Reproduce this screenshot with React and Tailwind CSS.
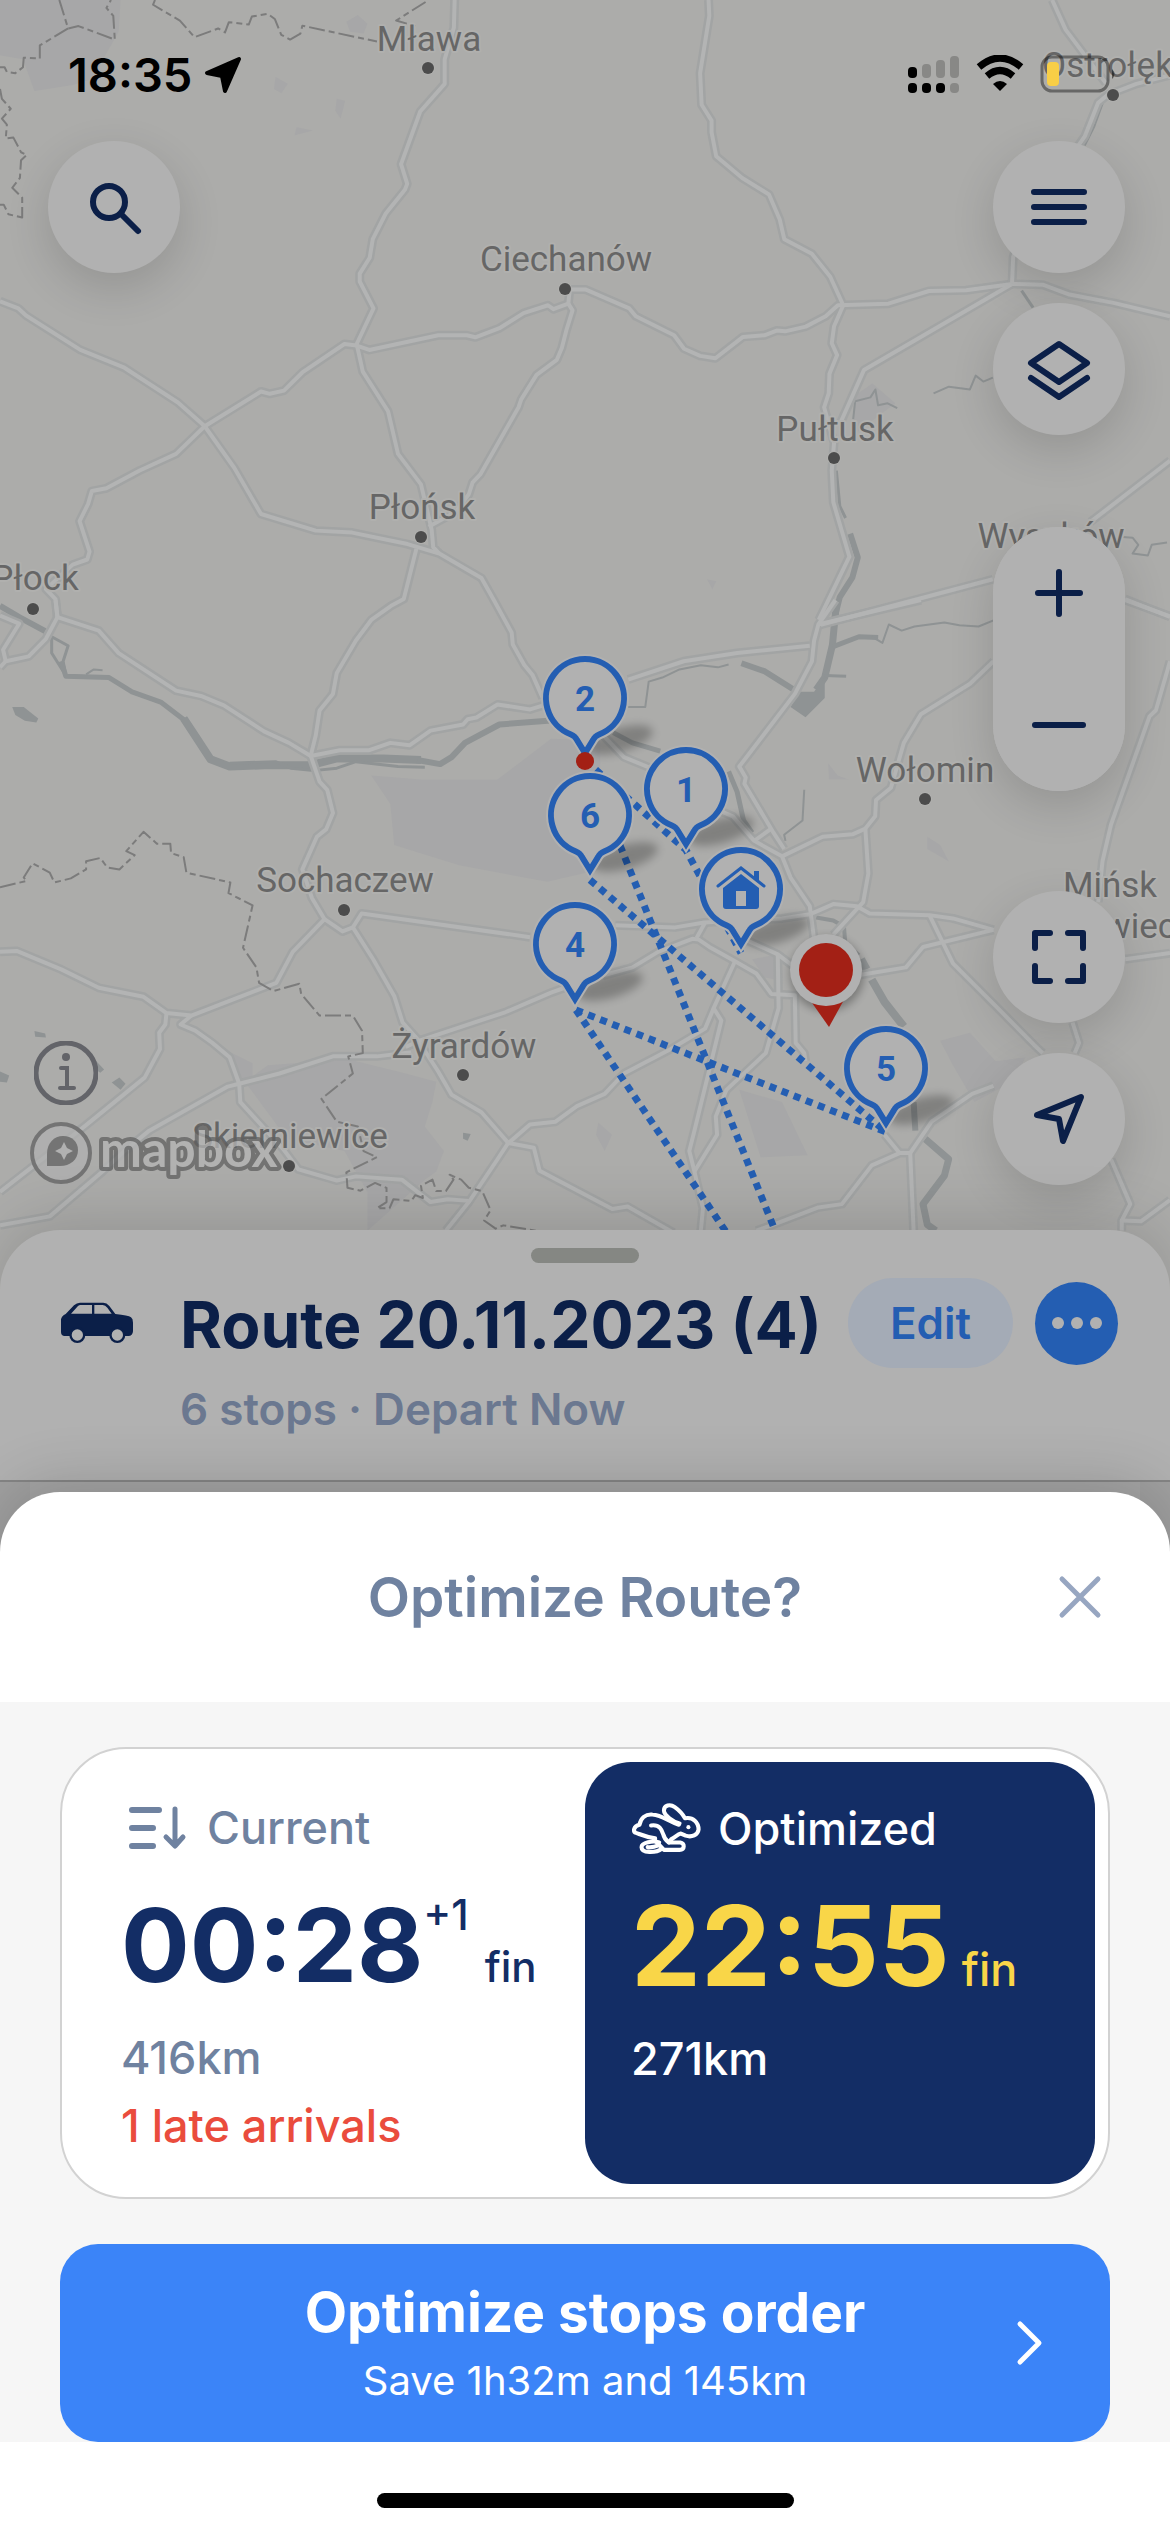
import React from "react";

/* Each map tile carries its own grid; lines are drawn in the grid of the tile they start in. */
const TILES = {
  nw: "translate(0 0) scale(0.3827 0.3954)",
  ne: "translate(570 0) scale(0.3827 0.3954)",
  sw: "translate(0 600) scale(0.3827 0.4082)",
  se: "translate(500 600) scale(0.4273 0.4082)",
};

const ROADS = {
  nw: [
    "1188,0 1186,70 1162,150 1162,212 1098,282 1048,415 1064,465 1058,480 1008,540 974,605 966,652 940,692 940,712 976,780 932,870 948,940 1014,1040 1040,1148 1100,1225 1128,1340 1132,1384 1148,1400",
    "0,762 48,780 68,798 210,885 325,930 465,1018 535,1078 612,1183 682,1300 825,1342 920,1347 1065,1376 1148,1400 1258,1462 1290,1517 1337,1600 1340,1630 1370,1682 1392,1708 1418,1765",
    "535,1078 460,1148 365,1190 278,1235 240,1242 230,1275 208,1318 234,1395 228,1415 190,1428 120,1490 145,1515 150,1560",
    "535,1078 682,990 705,996 742,988 790,942 900,870 932,874 965,885 1145,848 1220,848 1242,853 1305,830 1368,792 1432,772 1446,782 1485,768 1488,740",
    "1485,768 1496,785 1480,835 1468,880 1455,910 1402,948 1362,1010 1355,1030 1255,1200 1235,1220 1225,1250 1190,1295 1120,1332",
    "1088,1388 1055,1515 1022,1532 970,1568 930,1620 880,1702 870,1755 835,1797 825,1860 812,1911",
  ],
  ne: [
    "362,0 364,40 340,185 344,265 370,305 370,335 382,395 450,450 520,492 548,555 560,605 632,642 680,700 714,772 690,825 684,868 698,898 678,945 676,995 664,1030 690,1120 684,1190 688,1270 730,1408 650,1568",
    "0,740 0,732 40,732 155,780 172,800 272,848 298,882 340,900 380,906 452,852 508,848 540,836 562,838 616,826 668,800 700,772 832,768 938,736 1035,734 1155,718 1235,720 1305,745 1420,766 1568,800",
    "1155,718 768,936 704,1075",
    "1260,0 1295,75 1400,210",
    "1568,190 1480,212 1405,240 1380,260 1345,345 1190,560 1158,650 1155,718",
    "1568,1165 1360,1320",
    "655,1580 1105,1465",
    "1450,1515 1568,1560",
  ],
  sw: [
    "145,0 150,42 258,75 310,130 460,222 525,235 585,258 690,322 755,350 812,382 888,368 965,368 1020,350 1070,356 1125,320 1210,305 1222,292 1245,288 1300,256 1385,268 1420,258",
    "150,42 120,95 75,138 15,150 0,165",
    "0,38 50,58 8,122 15,150",
    "812,382 835,445 855,465 870,522 852,562 828,580 790,660 815,730 848,782 895,812 922,802 945,768 1385,826",
    "848,782 765,862 722,938 500,1018 435,1012 375,972 258,950 160,905 45,860 0,862",
    "922,802 975,880 1030,970 1052,1035 1090,1075 1145,1155 1180,1212 1258,1255 1328,1330 1395,1342 1410,1398 1600,1492 1640,1486 1760,1550",
    "1060,1095 1100,1078 1320,1010 1440,962 1490,945",
    "1075,1108 985,1118 870,1118 730,1160 625,1185 595,1192 390,1300 325,1350 268,1400 130,1510 0,1532",
    "435,1012 432,1040 416,1060 418,1100 378,1170 220,1290 0,1450",
    "500,1018 472,1040 510,1055 555,1085 600,1120 625,1185 628,1230 740,1345 780,1395 880,1422 930,1412 1050,1420 1125,1475 1170,1468 1225,1472",
    "1328,1330 1300,1370 1225,1475 1165,1545",
  ],
  se: [
    "20,1330 70,1285 130,1278 180,1240 245,1210 290,1160 400,1100 480,1050 500,1000",
    "270,797 410,802 478,790 660,780 725,770 780,745 835,750 865,768 1005,772 1060,780 1155,808",
    "240,920 310,900 370,862 450,830 465,832 490,850 550,885 600,915 635,965 690,968 692,1085 712,1110 715,1130",
    "460,828 480,790",
    "300,195 430,150 555,130 725,112",
    "785,0 745,60 735,100 730,150 690,230 560,408 575,435 572,450 640,570 665,610",
    "745,60 985,0",
    "1155,150 1100,205 985,280 945,350 915,460 880,490 878,530 855,560 825,574 755,580 660,628",
    "855,560 862,670 850,740 780,820",
    "240,330 290,385 360,415",
    "500,510 545,530 595,590 660,628 680,680 725,750 735,830",
    "595,590 635,560",
    "570,830 650,868 690,900",
    "650,868 652,1000 622,1110 530,1200 505,1265 508,1310 455,1400",
    "550,885 500,1000 518,1030 490,1150 455,1300 443,1350 455,1400 475,1490 470,1545",
    "845,918 950,900 990,850 1155,808",
    "1005,772 1060,890 1165,1000 1250,1090 1270,1110",
    "1568,150 1535,270 1520,285 1430,550 1410,640 1400,740",
    "1568,865 1463,880",
    "1340,1035 1355,1085 1345,1110",
    "1155,1190 1105,1210 1010,1278 960,1355 935,1355 870,1385 800,1480 745,1488 640,1530 600,1545",
    "900,1310 935,1355",
    "960,1355 968,1545",
    "1430,1370 1475,1480 1455,1520 1455,1545",
    "1455,1520 1500,1522 1568,1470",
    "1463,0 1568,40",
  ],
};

const BORDERS = {
  nw: [
    "155,0 178,72 205,66 300,100 296,40 278,20 290,0",
    "178,72 104,115 104,148 62,146 60,170 40,185 18,182 12,170 0,170",
    "0,225 5,250 28,275 5,300 18,315 15,350 35,348 55,385 70,392 55,405 52,450 32,475 58,500 58,550 22,542 10,518 0,518",
    "405,0 400,12 470,52 508,94 570,72 588,82 598,56 650,62 658,42 700,35 718,48 735,88 758,100 785,85 790,65 985,105",
    "1112,5 1035,52 1085,66",
  ],
  sw: [
    "0,704 70,688 62,680 85,645 130,668 142,692 185,682 225,660 225,640 262,632 280,655 312,660 352,625 330,615 375,568 410,597 445,597 447,620 480,630 487,668 602,692 597,718 660,748 635,852 670,900 677,938 715,958 782,940 787,965 835,1018 922,1018 946,1055 948,1110 910,1118 922,1160 840,1222 880,1278 935,1290 950,1350 985,1365 905,1402 908,1440 942,1447 980,1428 1010,1440 1010,1475 985,1490 1018,1490 1028,1468 1075,1472 1085,1458 1105,1465 1100,1435 1130,1420 1140,1448 1165,1448 1185,1420 1175,1408 1205,1420 1225,1440 1260,1448 1282,1495 1265,1520 1295,1540 1315,1532 1400,1545",
  ],
};

const RIVERS = [
  ["sw", 6, "0,14 50,42 118,76"],
  ["sw", 3, "135,90 178,112 165,150 172,185 135,130 135,90"],
  ["sw", 5, "160,150 172,187 285,190 345,225 420,250 490,300"],
  ["sw", 2, "225,182 245,170 268,172"],
  ["sw", 8, "480,290 515,340 550,390 600,408 690,405 810,405 880,388 1000,388 1100,392"],
  ["sw", 3, "600,400 720,396 760,412 820,418 880,412 930,396 1040,408 1110,410"],
  ["sw", 6, "1090,392 1150,402 1180,385 1215,350 1305,305 1440,295"],
  ["se", 5, "265,325 310,350 375,370"],
  ["se", 6, "565,155 620,175 700,228"],
  ["se", 7, "788,0 778,110 760,190 740,220"],
  ["se", 5, "778,115 840,90 885,92"],
  ["se", 2, "870,90 895,105 910,60 940,75 970,65 1040,55 1075,62 1120,65 1155,50"],
  ["se", 2, "300,262 340,262 348,200 380,190 420,170 470,160 510,165 535,158"],
  ["se", 3, "760,185 810,187"],
  ["se", 5, "535,420 555,470 570,540 590,570"],
  ["se", 2, "712,465 708,540 665,575 668,590"],
  ["se", 2, "665,640 690,690"],
  ["se", 4, "740,778 780,785 805,800 808,840 840,870"],
  ["se", 8, "845,880 858,905"],
  ["se", 8, "870,930 900,985 945,1045"],
  ["se", 6, "968,1230 972,1300"],
  ["se", 7, "995,1320 1050,1370 1040,1410 990,1480 1000,1530 1020,1545"],
  ["ne", 3, "696,1190 705,1280 720,1310"],
  ["ne", 6, "732,1350 752,1410 738,1460 705,1510 690,1568"],
  ["ne", 2, "950,995 990,978 1045,985 1060,950 1080,965 1105,955"],
  ["ne", 2, "740,1060 745,1015 785,1005 798,985 805,1025 830,1020 855,1032"],
  ["ne", 2, "1400,240 1370,320 1345,368"],
  ["ne", 3, "1180,735 1210,778"],
  ["ne", 2, "1445,1358 1470,1360 1485,1378 1470,1400 1510,1405 1520,1378 1560,1372"],
];

const WATER = [
  ["se", "680,262 700,225 735,225 760,190 760,240 715,287"],
  ["sw", "32,262 62,262 100,290 95,300 65,296 40,282"],
  ["sw", "90,1056 118,1062 120,1072 92,1070"],
  ["sw", "292,1182 312,1170 328,1185 315,1200"],
  ["sw", "0,1155 24,1165 18,1182 0,1180"],
  ["sw", "250,1128 272,1150 262,1158 250,1150"],
  ["sw", "1210,1305 1230,1308 1222,1325 1210,1320"],
];

const FORESTS = [
  ["nw", "0,0 315,0 310,80 240,200 190,215 90,230 60,150 0,140"],
  ["nw", "905,55 935,38 960,60 950,85 915,80"],
  ["nw", "720,195 752,212 735,236 716,225"],
  ["nw", "880,250 902,255 890,300 876,280"],
  ["nw", "775,322 818,330 770,342"],
  ["ne", "358,1465 382,1470 372,1490"],
  ["ne", "745,1000 790,970 850,1020 740,1100"],
  ["sw", "970,430 1100,440 1300,440 1440,340 1568,345 1568,660 1430,690 1200,650 1030,600 1020,500"],
  ["sw", "640,1180 700,1140 910,1125 1060,1160 1140,1180 1130,1230 1110,1290 1160,1350 1140,1400 1110,1420 960,1545 960,1450 900,1350 750,1320"],
  ["sw", "585,1100 660,1135 660,1180 625,1180"],
  ["se", "1030,1080 1100,1060 1160,1130 1230,1120 1200,1180 1110,1230 1060,1140"],
  ["se", "560,1200 660,1230 720,1360 610,1365"],
  ["se", "230,1280 262,1310 245,1350 225,1310"],
  ["se", "590,880 640,870 648,930 620,925"],
  ["se", "768,400 790,430 815,440 770,440"],
  ["se", "1000,580 1030,600 1050,640 1000,610"],
];

const CITIES = [
  ["Mława", 429, 51, 428, 68],
  ["Ostrołęka", 1117, 77, 1113, 95],
  ["Ciechanów", 566, 271, 565, 289],
  ["Pułtusk", 835, 441, 834, 458],
  ["Płońsk", 422, 519, 421, 537],
  ["Wyszków", 1051, 548, 1051, 565],
  ["Płock", 35, 590, 33, 609],
  ["Wołomin", 925, 782, 925, 799],
  ["Mińsk", 1110, 897, 1110, 960],
  ["Mazowiecki", 1110, 938, 1110, 960],
  ["Sochaczew", 345, 892, 344, 910],
  ["Żyrardów", 464, 1058, 463, 1075],
  ["Skierniewice", 290, 1148, 289, 1166],
];

const PINS = [
  ["2", 585, 698],
  ["6", 590, 815],
  ["1", 686, 789],
  ["4", 575, 944],
  ["5", 886, 1068],
  ["home", 741, 889],
];

const PIN_PATH = "M-14 36.5A39 39 0 1 1 14 36.5Q10 38 8 42L0 55L-8 42Q-10 38 -14 36.5Z";

function Tile({ at, children }) {
  return <g transform={TILES[at]}>{children}</g>;
}

function Line({ points, ...rest }) {
  return <polyline points={points} fill="none" strokeLinejoin="round" vectorEffect="non-scaling-stroke" {...rest} />;
}

function Map() {
  return (
    <svg
      className="absolute inset-x-0 top-0 h-full w-full"
      viewBox="0 0 1170 1290"
      preserveAspectRatio="xMidYMin slice"
      role="img"
      aria-label="Map with route stops"
    >
      <defs>
        <filter id="soft" x="-50%" y="-50%" width="200%" height="200%">
          <feGaussianBlur stdDeviation="4" />
        </filter>
      </defs>
      <rect width="1170" height="1290" fill="#acacaa" />
      {FORESTS.map(([tile, pts]) => (
        <Tile key={pts} at={tile}>
          <polygon points={pts} fill="#a7a7a8" />
        </Tile>
      ))}
      {RIVERS.map(([tile, w, pts]) => (
        <Tile key={pts} at={tile}>
          <Line points={pts} stroke="#8f9394" strokeWidth={w} />
        </Tile>
      ))}
      {WATER.map(([tile, pts]) => (
        <Tile key={pts} at={tile}>
          <polygon points={pts} fill="#8f9394" />
        </Tile>
      ))}
      {Object.keys(ROADS).map((tile) => (
        <Tile key={tile} at={tile}>
          {ROADS[tile].map((p) => (
            <Line key={p} points={p} stroke="#a2a4a4" strokeWidth="9" />
          ))}
        </Tile>
      ))}
      {Object.keys(ROADS).map((tile) => (
        <Tile key={tile} at={tile}>
          {ROADS[tile].map((p) => (
            <Line key={p} points={p} stroke="#b3b4b4" strokeWidth="4" />
          ))}
        </Tile>
      ))}
      {Object.keys(BORDERS).map((tile) => (
        <Tile key={tile} at={tile}>
          {BORDERS[tile].map((p) => (
            <Line key={p} points={p} stroke="#7c7c7c" strokeWidth="2" strokeDasharray="16 4 6 4" />
          ))}
        </Tile>
      ))}
      <g
        className="font-[Roboto,sans-serif] text-[35px]"
        fill="#666666"
        textAnchor="middle"
        stroke="#b0b0ae"
        strokeWidth="4"
        paintOrder="stroke"
        strokeLinejoin="round"
      >
        {CITIES.map(([name, x, y, dx, dy]) => (
          <React.Fragment key={name}>
            <circle cx={dx} cy={dy} r="6" fill="#4c4c4c" strokeWidth="2" />
            <text x={x} y={y}>{name}</text>
          </React.Fragment>
        ))}
      </g>
      <g fill="none" stroke="#245eb2" strokeWidth="7" strokeDasharray="7 6">
        <path d="M586 761L686 850L741 953" />
        <path d="M590 880L886 1132" />
        <path d="M576 1010L886 1132" />
        <path d="M576 1010L762 1285" />
        <path d="M586 761L797 1285" />
      </g>
      {PINS.map(([label, x, y]) => (
        <ellipse
          key={label}
          rx="34"
          ry="12"
          transform={`translate(${x + 35} ${y + 42}) rotate(-16)`}
          fill="#000000"
          opacity="0.25"
          filter="url(#soft)"
        />
      ))}
      {PINS.map(([label, x, y]) => (
        <g key={label} transform={`translate(${x} ${y})`}>
          <path d={PIN_PATH} fill="#b1b1b1" stroke="#b1b1b1" strokeWidth="10" />
          <path d={PIN_PATH} fill="#b1b1b1" stroke="#245eb2" strokeWidth="6" />
          {label === "home" ? (
            <g fill="#245eb2">
              <path d="M-18 -1L0 -15L18 -1V17Q18 20 15 20H-15Q-18 20 -18 17Z" />
              <path d="M-23 -3L0 -21L23 -3" fill="none" stroke="#245eb2" strokeWidth="3" strokeLinecap="round" />
              <path d="M13 -18H18V-6L13 -10Z" />
              <rect x="-5" y="2" width="10" height="15" fill="#b1b1b1" />
            </g>
          ) : (
            <text y="13" textAnchor="middle" fill="#245eb2" className="font-[Roboto,sans-serif] text-[35px] font-bold">
              {label}
            </text>
          )}
        </g>
      ))}
      <circle cx="585" cy="761" r="9" fill="#a32015" />
      <circle cx="827" cy="974" r="37" fill="#000000" opacity="0.3" filter="url(#soft)" />
      <path d="M810 1000L845 998L829 1027Z" fill="#a32015" />
      <circle cx="826" cy="970" r="36" fill="#b1b1b1" />
      <circle cx="826" cy="970" r="27" fill="#a32015" />
    </svg>
  );
}

function StatusBar() {
  return (
    <header className="flex items-start justify-between pt-[50px] pr-[52px] pl-[68px] text-black">
      <div className="flex items-center gap-3">
        <time className="text-[47px] leading-[50px] font-semibold">18:35</time>
        <svg width="38" height="38" viewBox="0 0 38 38" aria-hidden="true">
          <path d="M35 3L21 35L18 20L3 17Z" fill="currentColor" stroke="currentColor" strokeWidth="4" strokeLinejoin="round" />
        </svg>
      </div>
      <div className="flex gap-4 pt-[5px]">
        <svg width="52" height="38" viewBox="0 0 52 38" aria-label="Signal">
          <g fill="#888886">
            <rect x="14" y="9" width="9" height="14" rx="4" />
            <rect x="28" y="5" width="9" height="18" rx="4" />
            <rect x="42" y="1" width="9" height="22" rx="4" />
            <rect x="42" y="28" width="9" height="10" rx="4" />
          </g>
          <rect y="12" width="9" height="11" rx="4" />
          <rect y="28" width="9" height="10" rx="4" />
          <rect x="14" y="28" width="9" height="10" rx="4" />
          <rect x="28" y="28" width="9" height="10" rx="4" />
        </svg>
        <svg width="48" height="38" viewBox="0 0 48 38" aria-label="Wi-Fi">
          <path d="M3 12Q24 -6 45 12" fill="none" stroke="#000" strokeWidth="7" />
          <path d="M11 21Q24 10 37 21" fill="none" stroke="#000" strokeWidth="7" />
          <path d="M24 36L17 29Q24 23 31 29Z" />
        </svg>
        <svg width="78" height="38" viewBox="0 0 78 38" aria-label="Battery low">
          <rect x="2" y="2" width="66" height="34" rx="10" fill="none" stroke="#000" strokeOpacity="0.4" strokeWidth="3" />
          <rect x="7" y="7" width="12" height="24" rx="4" fill="#f8ce46" />
          <path d="M72 14Q77 19 72 24Z" fillOpacity="0.5" />
        </svg>
      </div>
    </header>
  );
}

function Fab({ label, children, className = "rounded-full shadow-[0_15px_45px_rgba(0,0,0,0.14)]" }) {
  return (
    <button
      type="button"
      aria-label={label}
      className={`flex size-[132px] shrink-0 items-center justify-center bg-[#b1b1b1] text-[#0b1f48] ${className}`}
    >
      <svg
        className="size-[66px]"
        viewBox="-33 -33 66 66"
        fill="none"
        stroke="currentColor"
        strokeWidth="6"
        strokeLinecap="round"
        strokeLinejoin="round"
        aria-hidden="true"
      >
        {children}
      </svg>
    </button>
  );
}

function MapControls() {
  return (
    <div className="flex flex-1 items-stretch justify-between pt-[41px] pr-[45px] pb-[45px] pl-[30px]">
      <div className="flex flex-col items-start justify-between">
        <div className="pl-[18px]">
          <Fab label="Search">
            <circle cx="-5" cy="-5" r="16" />
            <path d="M7 7L24 24" />
          </Fab>
        </div>
        <div className="flex flex-col items-start gap-4">
          <button type="button" aria-label="Map information" className="ml-1">
            <svg className="size-[64px]" viewBox="0 0 64 64" fill="none" stroke="#636469" aria-hidden="true">
              <circle cx="32" cy="32" r="30" strokeWidth="5" />
              <circle cx="32" cy="16" r="4" fill="#636469" stroke="none" />
              <path d="M27 27H33V47M26 47H40" strokeWidth="4" strokeLinecap="round" />
            </svg>
          </button>
          <a href="#mapbox" aria-label="Mapbox" className="block">
            <svg width="260" height="64" viewBox="0 0 260 64" aria-hidden="true">
              <circle cx="31" cy="32" r="29" fill="#b1b1b1" fillOpacity="0.7" stroke="#747474" strokeWidth="4" />
              <path d="M17 45V33C17 22 24 15 33 15C42 15 48 21 48 29C48 39 40 45 30 45Z" fill="#747474" />
              <path d="M34 21L37 27L43 30L37 33L34 39L31 33L25 30L31 27Z" fill="#b1b1b1" />
              <text
                x="70"
                y="46"
                className="font-[Lato,sans-serif] text-[50px] font-bold"
                opacity="0.75"
                fill="#b4b4b4"
                stroke="#606060"
                strokeWidth="8"
                strokeLinejoin="round"
                paintOrder="stroke"
              >
                mapbox
              </text>
            </svg>
          </a>
        </div>
      </div>

      <div className="flex flex-col">
        <div className="flex flex-col gap-[30px]">
          <Fab label="Menu">
            <path d="M-25 -15H25M-25 0H25M-25 15H25" />
          </Fab>
          <Fab label="Map layers">
            <path d="M0 -25L28 -6L0 13L-28 -6Z" />
            <path d="M-28 9L0 28L28 9" />
          </Fab>
        </div>
        <div className="mt-[92px] flex flex-col rounded-full bg-[#b1b1b1] shadow-[0_15px_45px_rgba(0,0,0,0.14)]">
          <Fab label="Zoom in" className="rounded-t-full">
            <path d="M-21 0H21M0 -21V21" />
          </Fab>
          <Fab label="Zoom out" className="rounded-b-full">
            <path d="M-24 0H24" />
          </Fab>
        </div>
        <div className="mt-[100px] flex flex-col gap-[30px]">
          <Fab label="Fit route">
            <path d="M-24 -9V-24H-9M9 -24H24V-9M24 9V24H9M-9 24H-24V9" />
          </Fab>
          <Fab label="My location">
            <path d="M22 -22L4 22L0 0L-22 -4Z" />
          </Fab>
        </div>
      </div>
    </div>
  );
}

function CarIcon() {
  return (
    <svg width="74" height="42" viewBox="32 80 218 126" aria-hidden="true" className="shrink-0">
      <path
        d="M33 132Q35 122 47 116L72 90Q80 82 90 82H160Q170 82 178 92L196 116Q235 120 243 126Q249 130 249 142V168Q248 182 235 182H42Q33 180 33 170Z"
        fill="#0b1f48"
      />
      <path d="M63 115L84 92Q87 89 92 89H126V115ZM133 89H158Q166 90 172 97L185 115H133Z" fill="#b1b1b1" />
      <circle cx="82" cy="179" r="24" fill="#0b1f48" />
      <circle cx="82" cy="179" r="17" fill="#b1b1b1" />
      <circle cx="202" cy="179" r="24" fill="#0b1f48" />
      <circle cx="202" cy="179" r="17" fill="#b1b1b1" />
    </svg>
  );
}

function RoutePanel() {
  return (
    <section className="relative rounded-t-[60px] bg-[#b1b1b1] shadow-[0_-10px_60px_rgba(0,0,0,0.14)]">
      <div className="pt-[18px] pb-11">
        <div className="mx-auto h-[15px] w-[108px] rounded-full bg-[#858783]" />
        <div className="mt-[15px] flex h-[90px] items-center pr-[52px] pl-[60px]">
          <CarIcon />
          <h1 className="ml-[46px] flex-1 pt-1 text-[64px] leading-[76px] font-bold whitespace-nowrap text-[#0b1f48]">
            Route 20.11.2023 (4)
          </h1>
          <button type="button" className="h-[90px] w-[165px] shrink-0 rounded-full bg-[#a4abb6] text-[44px] font-semibold text-[#245eb2]">
            Edit
          </button>
          <button
            type="button"
            aria-label="More options"
            className="ml-[22px] flex size-[83px] shrink-0 items-center justify-center gap-[7px] rounded-full bg-[#245eb2]"
          >
            <span className="size-3 rounded-full bg-[#b1b1b1]" />
            <span className="size-3 rounded-full bg-[#b1b1b1]" />
            <span className="size-3 rounded-full bg-[#b1b1b1]" />
          </button>
        </div>
        <p className="mt-[14px] pl-[180px] text-[44px] leading-[54px] font-semibold text-[#6b7890]">6 stops · Depart Now</p>
      </div>
      <div className="h-[72px] border-t-2 border-[#858585] bg-[#a0a0a0] px-[30px]">
        <div className="h-full bg-[#a5a5a5]" />
      </div>
    </section>
  );
}

function SortIcon() {
  return (
    <svg width="68" height="54" viewBox="0 0 68 54" fill="none" stroke="currentColor" strokeWidth="6" strokeLinecap="round" strokeLinejoin="round" aria-hidden="true">
      <path d="M11 9H38M11 27H32M11 45H32" />
      <path d="M54 8V44M45 36L54 45L62 36" strokeWidth="5" />
    </svg>
  );
}

function RabbitIcon() {
  return (
    <svg width="72" height="55" viewBox="93 62 212 162" fill="none" stroke="currentColor" strokeWidth="12" strokeLinecap="round" strokeLinejoin="round" aria-hidden="true">
      <path d="M236 128C218 124 190 104 190 90C190 74 208 70 222 80C236 90 246 102 252 113C276 108 292 126 292 146C290 162 272 170 254 164L240 158C230 160 224 168 212 174L204 184H238C252 186 252 206 236 206H190L160 174" />
      <path d="M234 132C202 122 186 104 156 102C136 100 122 112 118 132C100 136 98 152 108 156C120 160 136 168 164 172" />
      <path d="M152 134C178 130 184 148 188 160C190 170 196 178 204 184" />
      <path d="M176 184C158 178 124 184 124 198C124 216 166 216 184 202M142 198C152 200 166 196 176 192" />
      <circle cx="262" cy="139" r="6" fill="currentColor" stroke="none" />
    </svg>
  );
}

function OptimizeSheet() {
  return (
    <section role="dialog" aria-labelledby="sheet-title" className="relative -mt-[60px] rounded-t-[60px] bg-white shadow-[0_-10px_60px_rgba(0,0,0,0.16)]">
      <div className="grid h-[210px] grid-cols-[1fr_auto_1fr] items-center px-[60px]">
        <h2 id="sheet-title" className="col-start-2 text-[55px] leading-[66px] font-semibold text-[#6f82a0]">
          Optimize Route?
        </h2>
        <button type="button" aria-label="Close" className="flex size-[60px] items-center justify-center justify-self-end text-[#97a6c1]">
          <svg className="size-[44px]" viewBox="0 0 44 44" fill="none" stroke="currentColor" strokeWidth="5" strokeLinecap="round" aria-hidden="true">
            <path d="M4 4L40 40M40 4L4 40" />
          </svg>
        </button>
      </div>

      <div className="bg-[#f6f6f6] px-[60px] pt-[45px]">
        <div className="grid grid-cols-2 rounded-[66px] border-2 border-[#d2d2d2] bg-white p-[13px] text-[45px] leading-[54px] font-medium">
          <button type="button" className="flex flex-col items-start px-[46px] pt-[39px] pb-[31px] text-left text-[#6f82a0]">
            <span className="flex items-center gap-[18px]">
              <SortIcon />
              Current
            </span>
            <span className="flex h-[176px] items-center pt-1 text-[#132d65]">
              <span className="flex items-baseline">
                <span className="text-[102px] leading-[120px] font-bold">00:28</span>
                <span className="self-start text-[42px] leading-[60px]">+1</span>
                <span className="ml-4 text-[42px]">fin</span>
              </span>
            </span>
            <span>416km</span>
            <span className="mt-[14px] text-[#ea4c3d]">1 late arrivals</span>
          </button>
          <button
            type="button"
            aria-pressed="true"
            className="flex flex-col items-start rounded-[46px] bg-[#132d65] px-[46px] pt-[39px] pb-[31px] text-left text-white"
          >
            <span className="flex items-center gap-[15px]">
              <RabbitIcon />
              Optimized
            </span>
            <span className="flex h-[176px] items-center pt-1 text-[#f9d648]">
              <span className="flex items-baseline gap-3">
                <span className="text-[111px] leading-[120px] font-bold">22:55</span>
                <span>fin</span>
              </span>
            </span>
            <span>271km</span>
          </button>
        </div>

        <button
          type="button"
          className="mt-[45px] grid h-[198px] w-full grid-cols-[1fr_auto_1fr] items-center rounded-[38px] bg-[#3b84f8] px-[66px] text-white"
        >
          <span className="col-start-2 flex flex-col items-center">
            <span className="text-[55px] leading-[68px] font-bold">Optimize stops order</span>
            <span className="mt-2 text-[40px] leading-[54px]">Save 1h32m and 145km</span>
          </span>
          <svg className="justify-self-end" width="30" height="46" viewBox="0 0 30 46" fill="none" stroke="currentColor" strokeWidth="5" strokeLinecap="round" strokeLinejoin="round" aria-hidden="true">
            <path d="M6 4L25 23L6 42" />
          </svg>
        </button>
      </div>

      <div className="bg-white pt-[51px] pb-6">
        <div className="mx-auto h-[15px] w-[417px] rounded-full bg-black" />
      </div>
    </section>
  );
}

export default function App() {
  return (
    <div className="flex min-h-screen flex-col overflow-hidden bg-[#acacaa] font-[Inter,sans-serif]">
      <main className="relative flex flex-1 flex-col">
        <div className="absolute inset-x-0 top-0 -bottom-[60px]">
          <Map />
        </div>
        <div className="relative flex flex-1 flex-col">
          <StatusBar />
          <MapControls />
        </div>
      </main>
      <RoutePanel />
      <OptimizeSheet />
    </div>
  );
}
